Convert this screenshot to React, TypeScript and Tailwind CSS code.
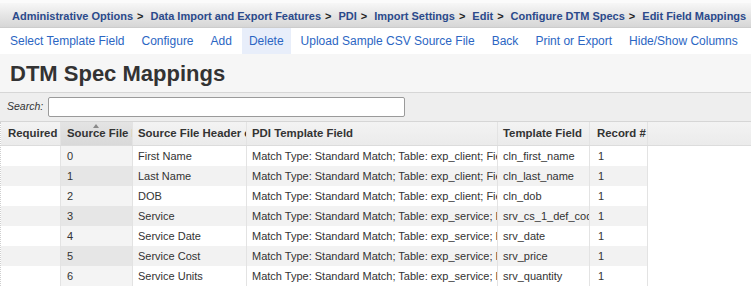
import React from 'react'

const crumbs = [
  'Administrative Options',
  'Data Import and Export Features',
  'PDI',
  'Import Settings',
  'Edit',
  'Configure DTM Specs',
  'Edit Field Mappings',
]

const actions = [
  'Select Template Field',
  'Configure',
  'Add',
  'Delete',
  'Upload Sample CSV Source File',
  'Back',
  'Print or Export',
  'Hide/Show Columns',
]

const rows = [
  ['0', 'First Name', 'Match Type: Standard Match; Table: exp_client; Field: cln_first_name', 'cln_first_name'],
  ['1', 'Last Name', 'Match Type: Standard Match; Table: exp_client; Field: cln_last_name', 'cln_last_name'],
  ['2', 'DOB', 'Match Type: Standard Match; Table: exp_client; Field: cln_dob', 'cln_dob'],
  ['3', 'Service', 'Match Type: Standard Match; Table: exp_service; Field: srv_cs_1_def_code', 'srv_cs_1_def_code'],
  ['4', 'Service Date', 'Match Type: Standard Match; Table: exp_service; Field: srv_date', 'srv_date'],
  ['5', 'Service Cost', 'Match Type: Standard Match; Table: exp_service; Field: srv_price', 'srv_price'],
  ['6', 'Service Units', 'Match Type: Standard Match; Table: exp_service; Field: srv_quantity', 'srv_quantity'],
]

const cols = 'grid grid-cols-[60px_72px_114px_251px_92px_58px_1fr]'
const cell = 'overflow-hidden whitespace-nowrap border-r border-[#e3e3e3] flex items-center'

export default function App() {
  return (
    <div
      className="w-[751px] h-[295px] overflow-hidden bg-white text-[#333]"
      style={{ fontFamily: '"Liberation Sans", Arial, sans-serif' }}
    >
      {/* breadcrumb */}
      <div className="h-[28px] flex items-center whitespace-nowrap pl-[12px] pt-[2px] bg-gradient-to-b from-[#f7f7f7] via-[#e6e6e6] to-[#d6d6d6] border-t-[3px] border-t-[#fbfbfb] border-b border-b-[#cccccc] font-bold text-[11px] text-[#2b4a8b]">
        {crumbs.map((c, i) => (
          <span key={c} className="flex items-center">
            <span>{c}</span>
            {i < crumbs.length - 1 && <span className="text-[#222] ml-[4px] mr-[7px]">&gt;</span>}
          </span>
        ))}
      </div>

      {/* actions */}
      <div className="h-[26px] flex items-stretch gap-[3px] pl-[3px] whitespace-nowrap text-[12px] text-[#2b66c3]">
        {actions.map(a => (
          <span key={a} className={`flex items-center px-[7px] ${a === 'Delete' ? 'bg-[#e8eefa]' : ''}`}>
            {a}
          </span>
        ))}
      </div>

      {/* title */}
      <div className="h-[38px] bg-[#f6f6f6] pl-[10px] flex items-center whitespace-nowrap font-bold text-[22px] text-[#333]">
        DTM Spec Mappings
      </div>

      {/* search */}
      <div className="h-[30px] bg-[#eeeeee] border-y border-[#d6d6d6] flex items-center pl-[7px] gap-[5px]">
        <span className="italic text-[10.5px] text-[#333]">Search:</span>
        <input className="w-[357px] h-[20px] bg-white border border-[#9a9a9a] rounded-[2px] outline-none" />
      </div>

      {/* table */}
      <div className="border-l border-dotted border-[#cfcfcf]">
        <div className={`${cols} h-[24px] font-bold text-[11.4px] text-[#333] bg-gradient-to-b from-[#f3f3f3] to-[#ebebeb] border-b border-[#dcdcdc]`}>
          <div className={`${cell} pl-[7px]`}>Required</div>
          <div className={`${cell} relative pl-[6px] bg-gradient-to-b from-[#e4e4e4] to-[#d9d9d9]`}>
            Source File Index
            <svg className="absolute left-[32px] top-[2px]" width="6" height="4" viewBox="0 0 6 4">
              <path d="M0 4 L3 0 L6 4 Z" fill="#8a8a8a" />
            </svg>
          </div>
          <div className={`${cell} pl-[5px]`}>Source File Header column</div>
          <div className={`${cell} pl-[5px]`}>PDI Template Field</div>
          <div className={`${cell} pl-[5px]`}>Template Field</div>
          <div className={`${cell} pl-[7px]`}>Record #</div>
          <div />
        </div>
        {rows.map((r, i) => {
          const odd = i % 2 === 1
          const bg = odd ? 'bg-[#f2f2f2]' : 'bg-white'
          return (
            <div key={r[0]} className={`${cols} h-[20px] text-[11px] text-[#333]`}>
              <div className={`${cell} ${bg}`} />
              <div className={`${cell} pl-[6px] ${odd ? 'bg-[#e6e6e6]' : 'bg-[#f4f4f4]'}`}>{r[0]}</div>
              <div className={`${cell} pl-[5px] ${bg}`}>{r[1]}</div>
              <div className={`${cell} pl-[5px] ${bg}`}>{r[2]}</div>
              <div className={`${cell} pl-[5px] ${bg}`}>{r[3]}</div>
              <div className={`${cell} pl-[8px] ${bg}`}>1</div>
              <div className="bg-white" />
            </div>
          )
        })}
      </div>
    </div>
  )
}
